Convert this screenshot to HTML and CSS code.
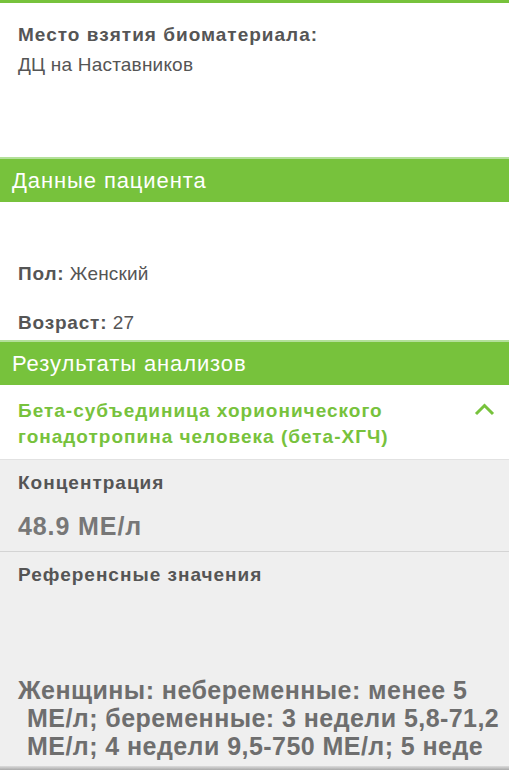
FILE: index.html
```html
<!DOCTYPE html>
<html lang="ru">
<head>
<meta charset="utf-8">
<title>Результаты</title>
<link rel="stylesheet" href="styles.css">
</head>
<body>
<div class="page">
  <div class="topbar"></div>
  <section class="place">
    <div class="label">Место взятия биоматериала:</div>
    <div class="value">ДЦ на Наставников</div>
  </section>
  <div class="bar"><span>Данные пациента</span></div>
  <section class="patient">
    <div class="row"><b>Пол:</b> Женский</div>
    <div class="row"><b>Возраст:</b> 27</div>
  </section>
  <div class="bar"><span>Результаты анализов</span></div>
  <div class="test-head">
    <div class="test-name">Бета-субъединица хорионического гонадотропина человека (бета-ХГЧ)</div>
    <svg class="chev" width="22" height="14" viewBox="0 0 22 14"><polyline points="3,12 11.5,3.5 20,12" fill="none" stroke="#77c23c" stroke-width="3"/></svg>
  </div>
  <div class="details">
    <div class="block conc">
      <div class="dlabel">Концентрация</div>
      <div class="dvalue">48.9 МЕ/л</div>
    </div>
    <div class="block ref">
      <div class="dlabel">Референсные значения</div>
      <p class="reftext">Женщины: небеременные: менее 5<br>МЕ/л; беременные: 3 недели 5,8-71,2<br>МЕ/л; 4 недели 9,5-750 МЕ/л; 5 неде</p>
    </div>
  </div>
  <div class="bottom-shadow"></div>
</div>
</body>
</html>
```

FILE: styles.css
```css
* { box-sizing: border-box; }
html, body { margin: 0; padding: 0; }
body {
  font-family: "Liberation Sans", Arial, sans-serif;
  color: #555;
  background: #fff;
  width: 509px;
  height: 770px;
  overflow: hidden;
}
.page { position: relative; height: 770px; overflow: hidden; }
.topbar { height: 3px; background: #77c23c; }
.place {
  height: 154px;
  padding: 17px 18px 0;
  font-size: 19px;
  line-height: 30px;
}
.label { font-weight: bold; color: #555; letter-spacing: 1px; }
.value { color: #555; letter-spacing: 0.2px; }
.bar {
  height: 45px;
  border-top: 2px solid #b3e09a;
  background: #77c23c;
  color: #fff;
  font-size: 22px;
  letter-spacing: 0.9px;
  line-height: 43px;
  padding-left: 12px;
}
.patient {
  height: 138px;
  padding: 57px 18px 0;
  font-size: 19px;
  line-height: 30px;
  letter-spacing: 0.2px;
}
.patient .row { margin-bottom: 19px; }
.patient b { color: #555; letter-spacing: 0.8px; }
.test-head {
  height: 75px;
  display: flex;
  justify-content: space-between;
  align-items: flex-start;
  padding: 13px 14px 0 18px;
  border-bottom: 1px solid #e2e2e2;
}
.test-name {
  width: 420px;
  font-size: 19px;
  font-weight: bold;
  color: #77c23c;
  line-height: 26px;
  letter-spacing: 1px;
}
.chev { margin-top: 4px; }
.details { background: #efefef; }
.block { padding: 0 18px; }
.conc {
  height: 92px;
  padding-top: 10px;
  border-bottom: 1px solid #d4d4d4;
}
.dlabel {
  font-size: 19px;
  font-weight: bold;
  color: #555;
  line-height: 26px;
  letter-spacing: 1px;
}
.dvalue {
  margin-top: 15px;
  font-size: 25px;
  font-weight: bold;
  color: #777;
  line-height: 30px;
  letter-spacing: 0.9px;
}
.ref { padding-top: 10px; height: 300px; }
.reftext {
  margin: 88px 0 0;
  font-size: 25px;
  font-weight: bold;
  color: #6e6e6e;
  line-height: 28px;
  letter-spacing: 0.45px;
  padding-left: 9px;
  text-indent: -9px;
  white-space: nowrap;
}
.bottom-shadow {
  position: absolute;
  left: 0; right: 0; bottom: 0;
  height: 4px;
  background: linear-gradient(#dcdcdc, #a9a9a9);
}
```
